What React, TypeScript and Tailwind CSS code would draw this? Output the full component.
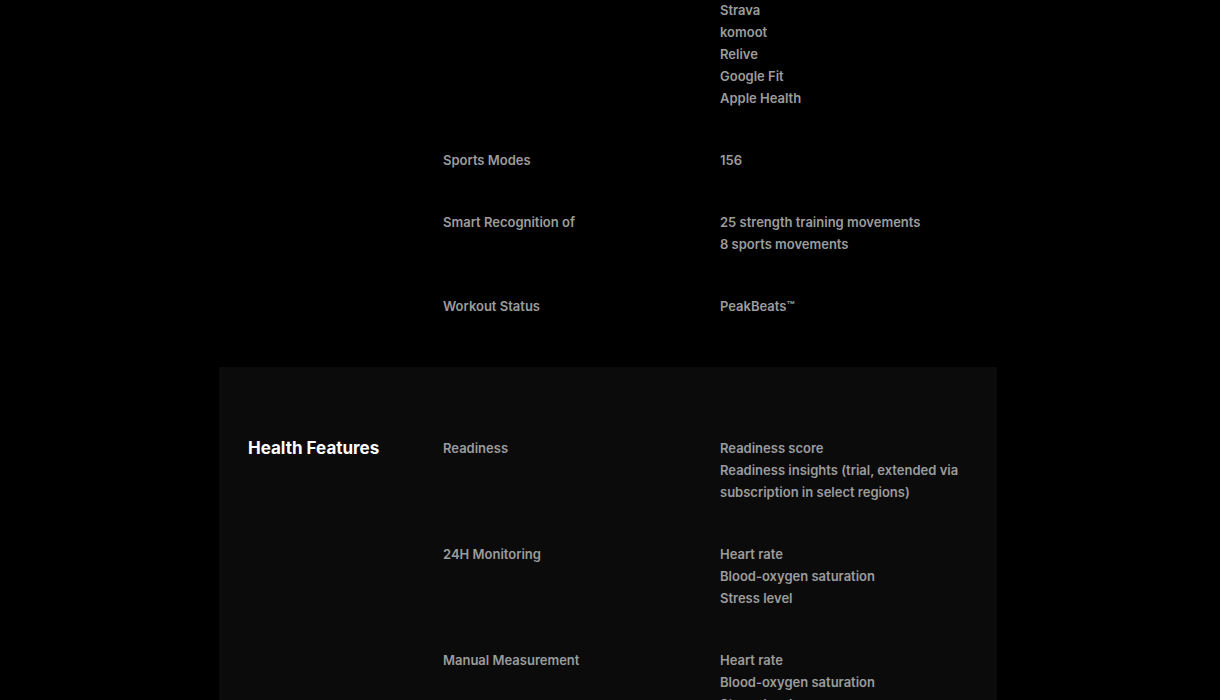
import React from 'react';

type Row = { label: string; values: string[] };

const sportsRows: Row[] = [
  { label: '', values: ['Strava', 'komoot', 'Relive', 'Google Fit', 'Apple Health'] },
  { label: 'Sports Modes', values: ['156'] },
  { label: 'Smart Recognition of', values: ['25 strength training movements', '8 sports movements'] },
  { label: 'Workout Status', values: ['PeakBeats™'] },
];

const healthRows: Row[] = [
  { label: 'Readiness', values: ['Readiness score', 'Readiness insights (trial, extended via subscription in select regions)'] },
  { label: '24H Monitoring', values: ['Heart rate', 'Blood-oxygen saturation', 'Stress level'] },
  { label: 'Manual Measurement', values: ['Heart rate', 'Blood-oxygen saturation', 'Stress level'] },
];

function SpecRows({ rows }: { rows: Row[] }) {
  return (
    <div className="flex flex-col gap-10">
      {rows.map((row, i) => (
        <div key={i} className="grid grid-cols-[277px_1fr]">
          <div className="text-[13px] leading-[22px] font-semibold text-[#9c9c9c]">{row.label}</div>
          <div className="flex flex-col pr-4">
            {row.values.map((v, j) => (
              <div key={j} className="text-[13px] leading-[22px] font-semibold text-[#9c9c9c]">{v}</div>
            ))}
          </div>
        </div>
      ))}
    </div>
  );
}

export default function App() {
  return (
    <div className="min-h-screen bg-black overflow-hidden" style={{ fontFamily: 'Inter, "Noto Sans", sans-serif' }}>
      <div className="ml-[219px] w-[778px]">
        {/* sports section, scrolled partly out of view */}
        <section className="grid grid-cols-[195px_1fr] pl-[29px] -mt-px pb-[50px]">
          <div />
          <SpecRows rows={sportsRows} />
        </section>

        <section className="grid grid-cols-[195px_1fr] pl-[29px] pt-[70px] pb-16 bg-[#0b0b0b]">
          <h2 className="text-[17px] leading-[22px] font-bold text-white">Health Features</h2>
          <SpecRows rows={healthRows} />
        </section>
      </div>
    </div>
  );
}
